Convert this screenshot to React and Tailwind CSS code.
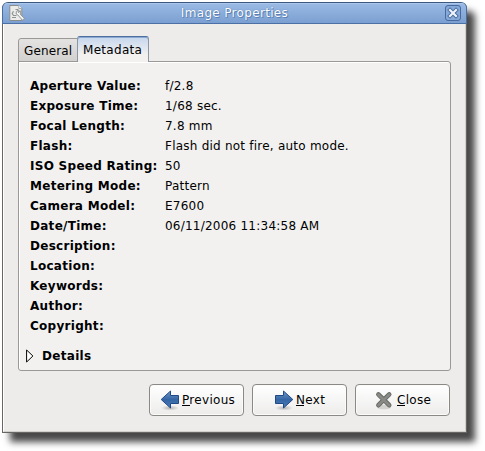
const rows = [
  ["Aperture Value:", "f/2.8"],
  ["Exposure Time:", "1/68 sec."],
  ["Focal Length:", "7.8 mm"],
  ["Flash:", "Flash did not fire, auto mode."],
  ["ISO Speed Rating:", "50"],
  ["Metering Mode:", "Pattern"],
  ["Camera Model:", "E7600"],
  ["Date/Time:", "06/11/2006 11:34:58 AM"],
  ["Description:", ""],
  ["Location:", ""],
  ["Keywords:", ""],
  ["Author:", ""],
  ["Copyright:", ""],
];

function PropertiesIcon() {
  return (
    <svg width="16" height="16" viewBox="0 0 16 16" className="shrink-0">
      <path d="M.8.5h9l3 3v12H.8z" fill="#ebebe9" stroke="#8a8d8e" />
      <path d="M9.8.5v3h3" fill="#fff" stroke="#a5a8aa" />
      <path d="M9 4.5H6.5M4.5 6.2 3.2 8.5l1.3 2H7.5M3 12.5h4" fill="none" stroke="#8f9393" strokeWidth="1.2" />
      <path d="M9.5 4.8 7.3 6.6 7.2 9l1.6.9 4.6 5.3 2-1.7-4.3-4.4c.8-1.4.6-2.8-.1-3.6l-1 2-1-.4z" fill="#f6f6f4" stroke="#8a8d8e" strokeWidth=".9" />
    </svg>
  );
}

function Arrow({ flip }) {
  const id = flip ? "next" : "prev";
  return (
    <svg width="20" height="21" viewBox="0 0 20 21" className="shrink-0">
      <defs>
        <linearGradient id={id} x1="0" y1="0" x2="0" y2="1">
          <stop offset="0" stopColor="#6f99c9" />
          <stop offset=".5" stopColor="#3465a4" />
          <stop offset="1" stopColor="#4b7dba" />
        </linearGradient>
        <radialGradient id={id + "Shade"}>
          <stop offset="0" stopColor="#555" stopOpacity=".4" />
          <stop offset="1" stopColor="#555" stopOpacity="0" />
        </radialGradient>
      </defs>
      <ellipse cx="10" cy="18" rx="9" ry="2.7" fill={`url(#${id}Shade)`} />
      <path
        d="M1.2 9.5 10.5 1v4.5h8v8h-8V18z"
        transform={flip ? "translate(20 0) scale(-1 1)" : undefined}
        fill={`url(#${id})`}
        stroke="#204a87"
      />
    </svg>
  );
}

function CloseIcon() {
  return (
    <svg width="20" height="19" viewBox="0 0 20 19" className="shrink-0">
      <ellipse cx="9" cy="16" rx="7" ry="2.3" fill="#d2d2d0" />
      <path d="M3.4 3.4 14.2 14.2M14.2 3.4 3.4 14.2" stroke="#666864" strokeWidth="4.6" strokeLinecap="round" />
      <path d="M3.4 3.4 14.2 14.2M14.2 3.4 3.4 14.2" stroke="#888a85" strokeWidth="2.8" strokeLinecap="round" />
    </svg>
  );
}

function Button({ icon, label, pad }) {
  return (
    <button className={`flex h-8 w-[95px] items-center rounded-[4px] border border-[#8b8985] bg-linear-to-b from-white to-[#edeceb] shadow-[inset_0_0_0_1px_#fbfbfa] ${pad}`}>
      {icon}
      <span className="relative ml-0.5 tracking-[0.3px] whitespace-nowrap">
        {label}
        <span className="absolute bottom-[4px] left-0 h-px w-2 bg-black" />
      </span>
    </button>
  );
}

export default function App() {
  return (
    <div className="h-[451px] w-[485px] overflow-hidden bg-white pt-[2px] pl-[2px] text-[12px] leading-5 text-black [font-family:'DejaVu_Sans',sans-serif]">
      <div className="flex h-[431px] w-[465px] flex-col overflow-visible rounded-t-[6px] border border-[#686663] border-t-[#3c5a80] bg-[#edeceb] shadow-[8px_9px_7px_0px_rgba(0,0,0,0.72)]">
        <header className="-mx-px flex h-[21px] shrink-0 items-center rounded-t-[5px] border-x border-b border-x-[#48709f] border-b-[#4a70a5] bg-linear-to-b from-[#9bbbe5] to-[#7b9fd1] pr-[5px] pl-[6px] shadow-[inset_0_1px_0_#abc6ea]">
          <PropertiesIcon />
          <h1 className="flex-1 pr-px text-center text-[12px] leading-5 font-normal tracking-[0.33px] text-white [text-shadow:0_0_1px_#3d6294,1px_1px_0_#5f86ba]">Image Properties</h1>
          <svg width="16" height="16" viewBox="0 0 16 16">
            <rect x=".5" y=".5" width="15" height="15" rx="2.5" fill="#86a9da" stroke="#456a9b" />
            <path d="m5 5 6 6m0-6-6 6" stroke="#456a9b" strokeWidth="4" strokeLinecap="square" />
            <path d="m5 5 6 6m0-6-6 6" stroke="#eef3fa" strokeWidth="2.2" strokeLinecap="square" />
          </svg>
        </header>
        <main className="flex flex-1 flex-col border border-t-0 border-l-[#fff] border-r-[#d2d0cd] border-b-[#d2d0cd] px-[14px] pt-3">
          <div className="z-10 -mb-px flex h-[26px] items-end">
            <div className="-mr-px h-6 w-[60px] rounded-tl-[3px] border border-[#9b9995] bg-linear-to-b from-[#e4e3e1] to-[#d3d1cf] pl-[5px] leading-[24px] tracking-[0.15px]">General</div>
            <div className="h-[26px] w-[72px] rounded-t-[3px] border border-b-0 border-[#8c98a8] border-t-[#4b6f9f] bg-linear-to-b from-[#c5d6ed] to-[#f2f1f0] to-70% pl-[5px] leading-[26px] tracking-[0.3px] shadow-[inset_0_1px_0_#8baad1]">Metadata</div>
          </div>
          <section className="h-[310px] w-[433px] rounded-[3px] rounded-tl-none border border-[#9b9995] bg-[#f2f1f0] pt-[14px] pl-[11px] shadow-[inset_1px_1px_0_#fff]">
            <dl>
              {rows.map(([name, value]) => (
                <div key={name} className="flex h-5">
                  <dt className="w-[135px] font-bold tracking-[0.28px] whitespace-nowrap">{name}</dt>
                  <dd className="tracking-[0.23px] whitespace-nowrap">{value}</dd>
                </div>
              ))}
            </dl>
            <div className="mt-[10px] flex items-center font-bold tracking-[0.3px]">
              <svg width="8" height="14" viewBox="0 0 8 14" className="-ml-[4px] mr-2">
                <path d="M.6 1v12l6.3-6z" fill="#fff" stroke="#000" />
              </svg>
              Details
            </div>
          </section>
          <div className="mr-px mt-[13px] flex justify-end gap-2">
            <Button icon={<Arrow />} label="Previous" pad="pl-[10px]" />
            <Button icon={<Arrow flip />} label="Next" pad="pl-[21px]" />
            <Button icon={<CloseIcon />} label="Close" pad="pl-[19px]" />
          </div>
        </main>
      </div>
    </div>
  );
}
